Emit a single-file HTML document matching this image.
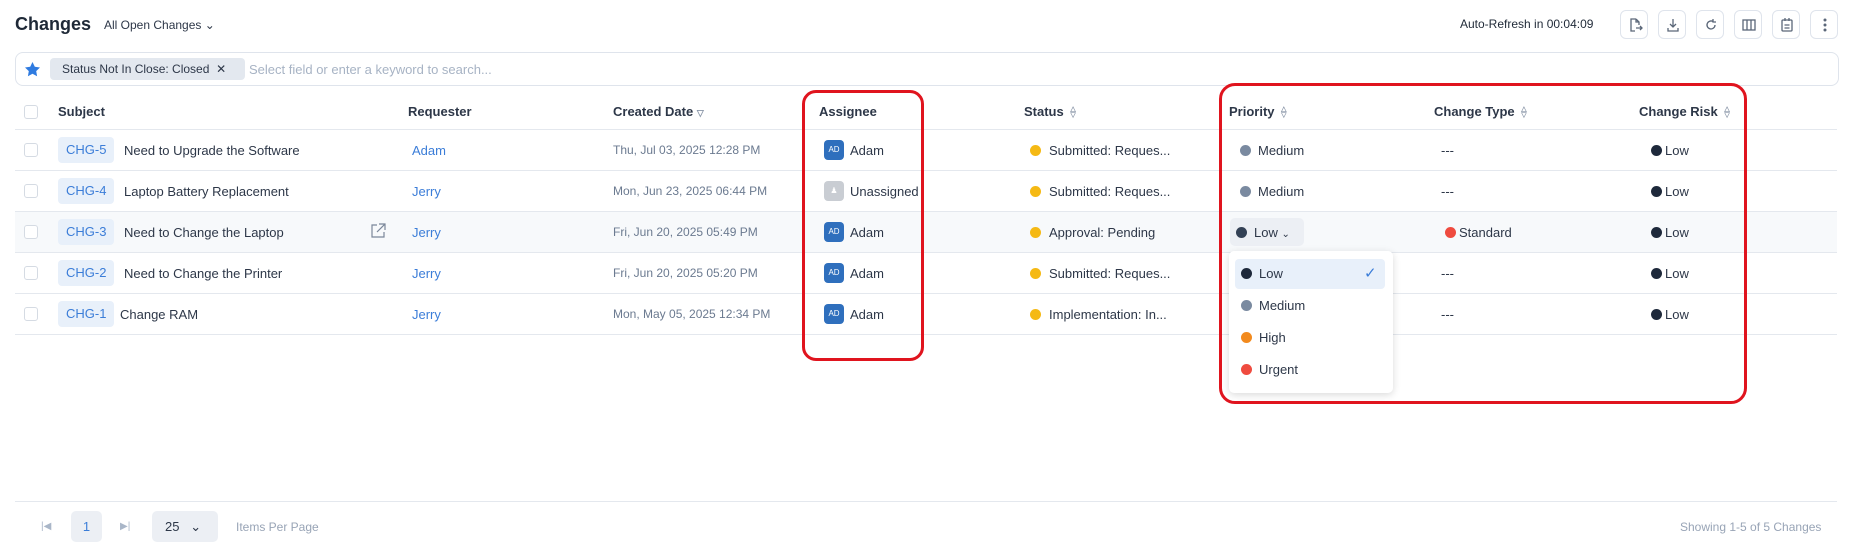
<!DOCTYPE html>
<html><head><meta charset="utf-8"><style>
*{box-sizing:border-box;margin:0;padding:0}
body{width:1852px;height:549px;background:#fff;font-family:"Liberation Sans",sans-serif;color:#2d3748;position:relative;overflow:hidden;font-size:13px}
.a{position:absolute;white-space:nowrap}
.btn{position:absolute;top:10px;width:28px;height:29px;border:1px solid #dfe4ec;border-radius:6px;background:#fff}
.btn svg{position:absolute;left:6px;top:6px}
.hd{font-weight:bold;color:#2d3748;font-size:13px;top:104px}
.cb{position:absolute;left:24px;width:14px;height:14px;border:1px solid #d5dbe3;border-radius:3px;background:#fff}
.line{position:absolute;left:15px;width:1822px;height:1px;background:#e4e8ee}
.chip{position:absolute;left:58px;height:26px;background:#e8f0fa;color:#3b7dd8;border-radius:4px;padding:0 8px;line-height:26px;font-size:13px}
.lk{color:#3b7dd8}
.dt{color:#6b7a90}
.av{position:absolute;left:824px;width:20px;height:20px;border-radius:4px;background:#2f6fbd;color:#fff;font-size:8px;line-height:20px;text-align:center}
.dot{position:absolute;width:11px;height:11px;border-radius:50%}
.sort{display:inline-block;vertical-align:middle;margin-left:3px}
</style></head><body>
<div class="a" style="left:15px;top:14px;font-size:18px;font-weight:bold;color:#1f2937">Changes</div>
<div class="a" style="left:104px;top:18px;font-size:12px;color:#2d3748">All Open Changes &#8964;</div>
<div class="a" style="left:1460px;top:17px;font-size:12px;color:#1f2937">Auto-Refresh in 00:04:09</div>
<div class="btn" style="left:1620px"><svg width="16" height="16" fill="none" stroke="#5a6678" stroke-width="1.3"><path d="M9 2H4v12h4M9 2l3 3v3M9 2v3h3M9 11h6M13 9l2 2-2 2"/></svg></div>
<div class="btn" style="left:1658px"><svg width="16" height="16" fill="none" stroke="#5a6678" stroke-width="1.3"><path d="M8 2v8M5 7l3 3 3-3M3 11v3h10v-3"/></svg></div>
<div class="btn" style="left:1696px"><svg width="16" height="16" fill="none" stroke="#5a6678" stroke-width="1.3"><path d="M12 8a4 4 0 1 1-2-3.5M10 2v3h3"/></svg></div>
<div class="btn" style="left:1734px"><svg width="16" height="16" fill="none" stroke="#5a6678" stroke-width="1.3"><rect x="2" y="3" width="12" height="10"/><path d="M6 3v10M10 3v10"/></svg></div>
<div class="btn" style="left:1772px"><svg width="16" height="16" fill="none" stroke="#5a6678" stroke-width="1.3"><rect x="3" y="3" width="10" height="11" rx="1"/><path d="M6 1v3M10 1v3M5.5 8h5M5.5 11h5"/></svg></div>
<div class="btn" style="left:1810px"><svg width="16" height="16" fill="#5a6678"><circle cx="8" cy="3" r="1.5"/><circle cx="8" cy="8" r="1.5"/><circle cx="8" cy="13" r="1.5"/></svg></div>

<div style="position:absolute;left:15px;top:52px;width:1824px;height:34px;border:1px solid #dfe4ec;border-radius:8px"></div>
<svg class="a" style="left:24px;top:61px" width="17" height="17"><path d="M8.5 1l2.3 4.8 5.2.7-3.8 3.6.9 5.2-4.6-2.5-4.6 2.5.9-5.2L1 6.5l5.2-.7z" fill="#2f7be0"/></svg>
<div class="a" style="left:50px;top:58px;width:195px;height:22px;background:#e3e8ef;border-radius:4px;font-size:12px;line-height:22px;padding-left:12px;color:#2d3748">Status Not In Close: Closed &nbsp;✕</div>
<div class="a" style="left:249px;top:62px;font-size:13px;color:#a7b3c4">Select field or enter a keyword to search...</div>

<div class="cb" style="top:105px"></div>
<div class="a hd" style="left:58px">Subject</div>
<div class="a hd" style="left:408px">Requester</div>
<div class="a hd" style="left:613px">Created Date <span style="color:#8a96a8;font-size:9px">▽</span></div>
<div class="a hd" style="left:819px">Assignee</div>
<div class="a hd" style="left:1024px">Status <span class="sort" style="color:#8a96a8;font-size:7px;line-height:6px;display:inline-block">△<br>▽</span></div>
<div class="a hd" style="left:1229px">Priority <span class="sort" style="color:#8a96a8;font-size:7px;line-height:6px;display:inline-block">△<br>▽</span></div>
<div class="a hd" style="left:1434px">Change Type <span class="sort" style="color:#8a96a8;font-size:7px;line-height:6px;display:inline-block">△<br>▽</span></div>
<div class="a hd" style="left:1639px">Change Risk <span class="sort" style="color:#8a96a8;font-size:7px;line-height:6px;display:inline-block">△<br>▽</span></div>
<div class="line" style="top:129px"></div>

<div style="position:absolute;left:15px;top:212px;width:1822px;height:40px;background:#f7f9fb"></div>

<div class="cb" style="top:143px"></div><div class="chip" style="top:137px">CHG-5</div><div class="a" style="left:124px;top:143px">Need to Upgrade the Software</div><div class="a lk" style="left:412px;top:143px">Adam</div><div class="a dt" style="left:613px;top:143px;font-size:12px">Thu, Jul 03, 2025 12:28 PM</div><div class="av" style="top:140px">AD</div><div class="a" style="left:850px;top:143px">Adam</div>
<div class="dot" style="left:1030px;top:145px;background:#f5b914"></div><div class="a" style="left:1049px;top:143px">Submitted: Reques...</div>
<div class="dot" style="left:1240px;top:145px;background:#7a8aa0"></div><div class="a" style="left:1258px;top:143px">Medium</div>
<div class="a" style="left:1441px;top:143px">---</div>
<div class="dot" style="left:1651px;top:145px;background:#1e293b"></div><div class="a" style="left:1665px;top:143px">Low</div>
<div class="line" style="top:170px"></div>

<div class="cb" style="top:184px"></div><div class="chip" style="top:178px">CHG-4</div><div class="a" style="left:124px;top:184px">Laptop Battery Replacement</div><div class="a lk" style="left:412px;top:184px">Jerry</div><div class="a dt" style="left:613px;top:184px;font-size:12px">Mon, Jun 23, 2025 06:44 PM</div><div class="av" style="top:181px;background:#c9cdd3">&#9823;</div><div class="a" style="left:850px;top:184px">Unassigned</div>
<div class="dot" style="left:1030px;top:186px;background:#f5b914"></div><div class="a" style="left:1049px;top:184px">Submitted: Reques...</div>
<div class="dot" style="left:1240px;top:186px;background:#7a8aa0"></div><div class="a" style="left:1258px;top:184px">Medium</div>
<div class="a" style="left:1441px;top:184px">---</div>
<div class="dot" style="left:1651px;top:186px;background:#1e293b"></div><div class="a" style="left:1665px;top:184px">Low</div>
<div class="line" style="top:211px"></div>

<div class="cb" style="top:225px"></div><div class="chip" style="top:219px">CHG-3</div><div class="a" style="left:124px;top:225px">Need to Change the Laptop</div>
<svg class="a" style="left:370px;top:223px" width="16" height="16" fill="none" stroke="#7a8699" stroke-width="1.2"><path d="M7 2H2v12h12V9M9 1h6v6M15 1L7 9"/></svg>
<div class="a lk" style="left:412px;top:225px">Jerry</div><div class="a dt" style="left:613px;top:225px;font-size:12px">Fri, Jun 20, 2025 05:49 PM</div><div class="av" style="top:222px">AD</div><div class="a" style="left:850px;top:225px">Adam</div>
<div class="dot" style="left:1030px;top:227px;background:#f5b914"></div><div class="a" style="left:1049px;top:225px">Approval: Pending</div>
<div class="a" style="left:1230px;top:218px;width:74px;height:28px;background:#eceff4;border-radius:5px"></div>
<div class="dot" style="left:1236px;top:227px;background:#334155"></div><div class="a" style="left:1254px;top:225px">Low <span style="font-size:10px">&#8964;</span></div>
<div class="dot" style="left:1445px;top:227px;background:#ef4b3f"></div><div class="a" style="left:1459px;top:225px">Standard</div>
<div class="dot" style="left:1651px;top:227px;background:#1e293b"></div><div class="a" style="left:1665px;top:225px">Low</div>
<div class="line" style="top:252px"></div>

<div class="cb" style="top:266px"></div><div class="chip" style="top:260px">CHG-2</div><div class="a" style="left:124px;top:266px">Need to Change the Printer</div><div class="a lk" style="left:412px;top:266px">Jerry</div><div class="a dt" style="left:613px;top:266px;font-size:12px">Fri, Jun 20, 2025 05:20 PM</div><div class="av" style="top:263px">AD</div><div class="a" style="left:850px;top:266px">Adam</div>
<div class="dot" style="left:1030px;top:268px;background:#f5b914"></div><div class="a" style="left:1049px;top:266px">Submitted: Reques...</div>
<div class="a" style="left:1441px;top:266px">---</div>
<div class="dot" style="left:1651px;top:268px;background:#1e293b"></div><div class="a" style="left:1665px;top:266px">Low</div>
<div class="line" style="top:293px"></div>

<div class="cb" style="top:307px"></div><div class="chip" style="top:301px">CHG-1</div><div class="a" style="left:120px;top:307px">Change RAM</div><div class="a lk" style="left:412px;top:307px">Jerry</div><div class="a dt" style="left:613px;top:307px;font-size:12px">Mon, May 05, 2025 12:34 PM</div><div class="av" style="top:304px">AD</div><div class="a" style="left:850px;top:307px">Adam</div>
<div class="dot" style="left:1030px;top:309px;background:#f5b914"></div><div class="a" style="left:1049px;top:307px">Implementation: In...</div>
<div class="a" style="left:1441px;top:307px">---</div>
<div class="dot" style="left:1651px;top:309px;background:#1e293b"></div><div class="a" style="left:1665px;top:307px">Low</div>
<div class="line" style="top:334px"></div>

<div class="a" style="left:1229px;top:251px;width:164px;height:142px;background:#fff;border-radius:5px;box-shadow:0 2px 8px rgba(0,0,0,.15)"></div>
<div class="a" style="left:1235px;top:259px;width:150px;height:30px;background:#e8f0fa;border-radius:4px"></div>
<div class="dot" style="left:1241px;top:268px;background:#1e293b"></div><div class="a" style="left:1259px;top:266px">Low</div>
<div class="a" style="left:1364px;top:264px;color:#3b7dd8;font-size:15px">✓</div>
<div class="dot" style="left:1241px;top:300px;background:#7a8aa0"></div><div class="a" style="left:1259px;top:298px">Medium</div>
<div class="dot" style="left:1241px;top:332px;background:#f28a1e"></div><div class="a" style="left:1259px;top:330px">High</div>
<div class="dot" style="left:1241px;top:364px;background:#ef4b3f"></div><div class="a" style="left:1259px;top:362px">Urgent</div>

<div class="a" style="left:802px;top:90px;width:122px;height:271px;border:3px solid #e0141e;border-radius:14px"></div>
<div class="a" style="left:1219px;top:83px;width:528px;height:321px;border:3px solid #e0141e;border-radius:16px"></div>

<div class="line" style="top:501px"></div>
<div class="a" style="left:41px;top:521px;color:#a9b6c8;font-size:10px">|◀</div>
<div class="a" style="left:71px;top:511px;width:31px;height:31px;background:#eceff4;border-radius:5px;color:#3b7dd8;text-align:center;line-height:31px">1</div>
<div class="a" style="left:120px;top:521px;color:#a9b6c8;font-size:10px">▶|</div>
<div class="a" style="left:152px;top:511px;width:66px;height:31px;background:#eceff4;border-radius:5px;line-height:31px;padding-left:13px;font-size:13px">25 &nbsp;&nbsp;&#8964;</div>
<div class="a" style="left:236px;top:520px;color:#98a4b6;font-size:12px">Items Per Page</div>
<div class="a" style="left:1680px;top:520px;color:#98a4b6;font-size:12px;width:141px;text-align:right">Showing 1-5 of 5 Changes</div>
</body></html>
